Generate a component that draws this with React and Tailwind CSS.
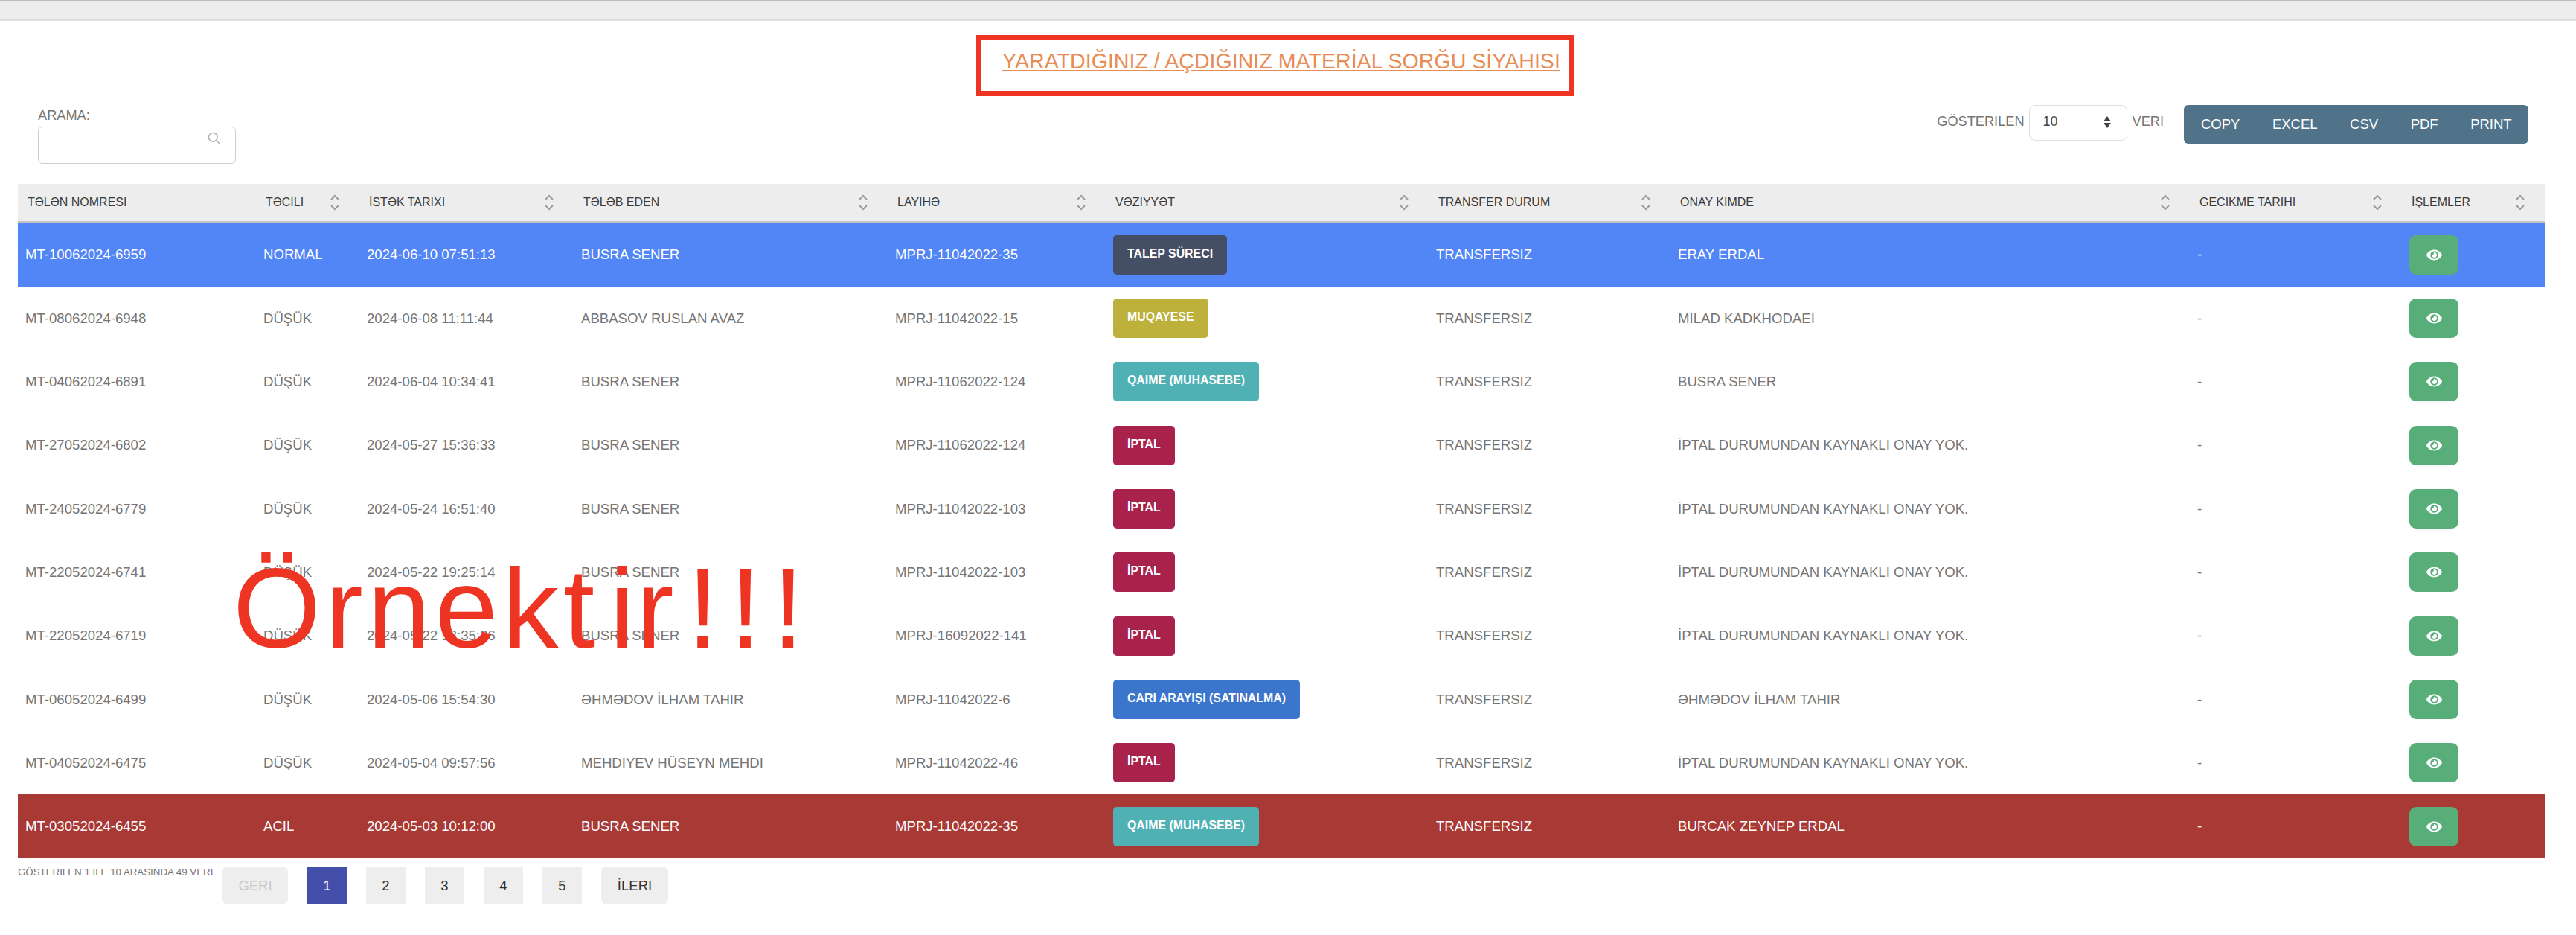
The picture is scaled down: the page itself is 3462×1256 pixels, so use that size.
import React from "react";
import { FaEye } from "react-icons/fa";
import { HiOutlineSearch } from "react-icons/hi";

const B = {
  talep: ["TALEP SÜRECI", "bg-[#444e65]"],
  muq: ["MUQAYESE", "bg-[#bdb03b]"],
  qaime: ["QAIME (MUHASEBE)", "bg-[#50b1b5]"],
  iptal: ["İPTAL", "bg-[#a8224c]"],
  cari: ["CARI ARAYIŞI (SATINALMA)", "bg-[#3b76cc]"],
};
const Y = "İPTAL DURUMUNDAN KAYNAKLI ONAY YOK.";
const heights = [86, 85, 85, 86, 85, 85, 86, 85, 85, 86];
const rows = [
  ["MT-10062024-6959", "NORMAL", "2024-06-10 07:51:13", "BUSRA SENER", "MPRJ-11042022-35", "talep", "ERAY ERDAL", "blue"],
  ["MT-08062024-6948", "DÜŞÜK", "2024-06-08 11:11:44", "ABBASOV RUSLAN AVAZ", "MPRJ-11042022-15", "muq", "MILAD KADKHODAEI"],
  ["MT-04062024-6891", "DÜŞÜK", "2024-06-04 10:34:41", "BUSRA SENER", "MPRJ-11062022-124", "qaime", "BUSRA SENER"],
  ["MT-27052024-6802", "DÜŞÜK", "2024-05-27 15:36:33", "BUSRA SENER", "MPRJ-11062022-124", "iptal", Y],
  ["MT-24052024-6779", "DÜŞÜK", "2024-05-24 16:51:40", "BUSRA SENER", "MPRJ-11042022-103", "iptal", Y],
  ["MT-22052024-6741", "DÜŞÜK", "2024-05-22 19:25:14", "BUSRA SENER", "MPRJ-11042022-103", "iptal", Y],
  ["MT-22052024-6719", "DÜŞÜK", "2024-05-22 18:35:36", "BUSRA SENER", "MPRJ-16092022-141", "iptal", Y],
  ["MT-06052024-6499", "DÜŞÜK", "2024-05-06 15:54:30", "ƏHMƏDOV İLHAM TAHIR", "MPRJ-11042022-6", "cari", "ƏHMƏDOV İLHAM TAHIR"],
  ["MT-04052024-6475", "DÜŞÜK", "2024-05-04 09:57:56", "MEHDIYEV HÜSEYN MEHDI", "MPRJ-11042022-46", "iptal", Y],
  ["MT-03052024-6455", "ACIL", "2024-05-03 10:12:00", "BUSRA SENER", "MPRJ-11042022-35", "qaime", "BURCAK ZEYNEP ERDAL", "red"],
];
const cols = [
  ["TƏLƏN NOMRESI", 320, false],
  ["TƏCILI", 139, true],
  ["İSTƏK TARIXI", 288, true],
  ["TƏLƏB EDEN", 422, true],
  ["LAYIHƏ", 293, true],
  ["VƏZIYYƏT", 434, true],
  ["TRANSFER DURUM", 325, true],
  ["ONAY KIMDE", 698, true],
  ["GECIKME TARIHI", 285, true],
  ["İŞLEMLER", 192, true],
];

function Sort() {
  return (
    <svg width="14" height="24" viewBox="0 0 14 24" fill="none" stroke="#9c9c9c" strokeWidth="2" className="shrink-0">
      <path d="M2 8l5-5 5 5" />
      <path d="M2 16l5 5 5-5" />
    </svg>
  );
}

function Cell({ children, className = "" }) {
  return <td className={"px-[10px] align-middle " + className}>{children}</td>;
}

export default function App() {
  return (
    <div className="w-[3462px] h-[1256px] bg-white overflow-hidden relative font-['Liberation_Sans',Arial,sans-serif] text-[18.6px] text-[#757575]">
      <div className="h-[28px] bg-[#ededed] border-t-2 border-t-[#bdbdbd] border-b-2 border-b-[#dedede]" />
      <div className="flex justify-center pt-[19px] pr-[34px]">
        <div className="w-[804px] h-[82px] border-[7px] border-[#ee3524] pl-[28px] pt-[9px]">
          <a className="text-[28.6px] leading-[38px] text-[#e88c56] underline whitespace-nowrap">YARATDIĞINIZ / AÇDIĞINIZ MATERİAL SORĞU SİYAHISI</a>
        </div>
      </div>

      <div className="flex justify-between items-start pl-[51px] pr-[64px] mt-[12px] h-[79px]">
        <div>
          <div className="text-[18.2px] leading-[28px] mb-[1px]">ARAMA:</div>
          <div className="w-[266px] h-[50px] border border-[#cfcfcf] rounded-[6px] relative">
            <HiOutlineSearch className="absolute right-[18px] top-[5px] text-[#b5b5b5]" size={20} />
          </div>
        </div>
        <div className="flex items-start">
          <span className="text-[18.2px] leading-[44px] mr-[6px]">GÖSTERILEN</span>
          <div className="w-[132px] h-[48px] border border-[#dedede] rounded-[8px] flex items-center justify-between pl-[18px] pr-[20px] text-[#444] text-[18px] mr-[7px]">
            <span className="-mt-[3px]">10</span>
            <svg width="12" height="20" viewBox="0 0 12 20" fill="#444" className="-mt-[3px]">
              <path d="M6 2l5 7H1zM6 18l5-7H1z" />
            </svg>
          </div>
          <span className="text-[18.2px] leading-[44px] mr-[27px]">VERI</span>
          <div className="h-[52px] w-[463px] bg-[#51738a] rounded-[6px] flex items-center pl-[23px] gap-[43.5px] text-white text-[18.5px]">
            <span>COPY</span>
            <span>EXCEL</span>
            <span>CSV</span>
            <span>PDF</span>
            <span>PRINT</span>
          </div>
        </div>
      </div>

      <div className="mt-[27px] pl-[24px]">
        <table className="table-fixed border-separate border-spacing-0 w-[3396px]">
          <colgroup>
            {cols.map((c) => (
              <col key={c[0]} style={{ width: c[1] }} />
            ))}
          </colgroup>
          <thead>
            <tr>
              {cols.map((c) => (
                <th key={c[0]} className="h-[52px] bg-[#ededed] border-b-2 border-b-[#c4c4c4] pl-[13px] pr-[26px] font-normal text-left text-[16px] text-[#3a3a3a]">
                  <div className="flex items-center justify-between">
                    <span>{c[0]}</span>
                    {c[2] && <Sort />}
                  </div>
                </th>
              ))}
            </tr>
          </thead>
          <tbody>
            {rows.map((r, i) => {
              const tone = r[7] === "blue" ? "bg-[#5285f6] text-white" : r[7] === "red" ? "bg-[#a93934] text-white" : "";
              const b = B[r[5]];
              return (
                <tr key={r[0]} className={tone} style={{ height: heights[i] }}>
                  <Cell>{r[0]}</Cell>
                  <Cell>{r[1]}</Cell>
                  <Cell>{r[2]}</Cell>
                  <Cell>{r[3]}</Cell>
                  <Cell>{r[4]}</Cell>
                  <Cell>
                    <span className={"inline-block h-[53px] leading-[50px] px-[19px] rounded-[5px] text-white font-bold text-[15.9px] align-middle " + b[1]}>{b[0]}</span>
                  </Cell>
                  <Cell>TRANSFERSIZ</Cell>
                  <Cell>{r[6]}</Cell>
                  <Cell>-</Cell>
                  <Cell>
                    <span className="inline-flex w-[66px] h-[53px] items-center justify-center rounded-[9px] bg-[#58ae78] text-white align-middle">
                      <FaEye size={21} />
                    </span>
                  </Cell>
                </tr>
              );
            })}
          </tbody>
        </table>
      </div>

      <div className="flex items-start pl-[24px] mt-[11px]">
        <div className="w-[275px] text-[13.3px] leading-[16px]">GÖSTERILEN 1 ILE 10 ARASINDA 49 VERI</div>
        <div className="flex gap-[26px] text-[18.5px] text-[#333]">
          <div className="w-[88px] h-[51px] rounded-[8px] bg-[#eeeeee] text-[#c8c8c8] flex items-center justify-center">GERI</div>
          <div className="w-[53px] h-[51px] bg-[#444fac] text-white flex items-center justify-center">1</div>
          <div className="w-[53px] h-[51px] bg-[#eeeeee] flex items-center justify-center">2</div>
          <div className="w-[53px] h-[51px] bg-[#eeeeee] flex items-center justify-center">3</div>
          <div className="w-[53px] h-[51px] bg-[#eeeeee] flex items-center justify-center">4</div>
          <div className="w-[53px] h-[51px] bg-[#eeeeee] flex items-center justify-center">5</div>
          <div className="w-[90px] h-[51px] rounded-[8px] bg-[#eeeeee] flex items-center justify-center">İLERI</div>
        </div>
      </div>

      <div className="absolute left-[313px] top-[729px] text-[152px] leading-[176px] tracking-[6px] text-[#ee3524] whitespace-nowrap pointer-events-none">
        Örnek<span className="tracking-[20px]">t</span><span className="tracking-[2px]">i</span><span className="tracking-[18px]">r</span><span className="tracking-[15px]">!!!</span>
      </div>
    </div>
  );
}
